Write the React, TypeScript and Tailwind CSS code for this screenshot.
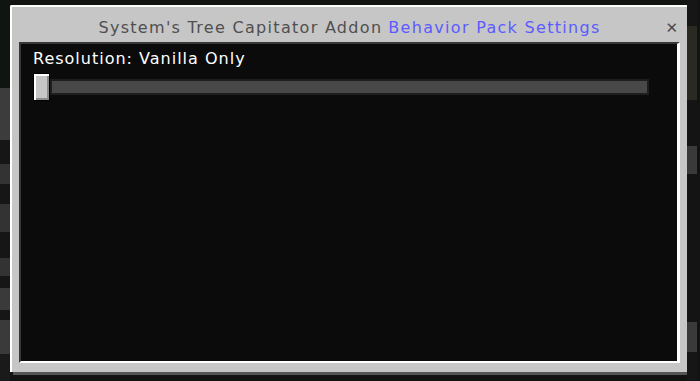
import React from 'react';

const font = { fontFamily: '"DejaVu Sans", "Liberation Sans", sans-serif' };

function EdgeStrip({ blocks }: { blocks: { h: string; c: string }[] }) {
  return (
    <div className="flex w-[10px] flex-col">
      {blocks.map((b, i) => (
        <div key={i} className={`${b.h} ${b.c}`} />
      ))}
    </div>
  );
}

function Slider() {
  return (
    <div className="mt-[4px] flex items-center">
      <div className="h-[28px] w-[17px] border border-black bg-[#c6c6c6] shadow-[inset_2px_2px_0_#ffffff,inset_-2px_-2px_0_#8b8b8b]" />
      <div className="h-[16px] w-[599px] border-2 border-[#1e1e1e] bg-[#484848]" />
    </div>
  );
}

export default function App() {
  return (
    <div className="flex h-[381px] w-[700px] overflow-hidden bg-[#121412]" style={font}>
      <EdgeStrip
        blocks={[
          { h: 'h-[88px]', c: 'bg-[#0f1510]' },
          { h: 'h-[52px]', c: 'bg-[#3c3c3c]' },
          { h: 'h-[24px]', c: 'bg-[#161616]' },
          { h: 'h-[20px]', c: 'bg-[#333333]' },
          { h: 'h-[20px]', c: 'bg-[#161616]' },
          { h: 'h-[28px]', c: 'bg-[#333333]' },
          { h: 'h-[26px]', c: 'bg-[#161616]' },
          { h: 'h-[18px]', c: 'bg-[#333333]' },
          { h: 'h-[12px]', c: 'bg-[#161616]' },
          { h: 'h-[22px]', c: 'bg-[#3a3a3a]' },
          { h: 'h-[10px]', c: 'bg-[#161616]' },
          { h: 'h-[34px]', c: 'bg-[#3a3a3a]' },
          { h: 'h-[27px]', c: 'bg-[#1a1a1a]' },
        ]}
      />
      <div className="mt-[5px] flex h-[367px] w-[677px] flex-col rounded-tl-[2px] border-l-2 border-t-2 border-white bg-[#c6c6c6] shadow-[3px_3px_0_#555555]">
        <div className="relative flex h-[35px] items-center justify-center pt-[7px] text-[16px] tracking-[1.3px]">
          <span className="text-[#4f4f4f]">System's Tree Capitator Addon</span>
          <span className="ml-[6px] text-[#5b5bff]">Behavior Pack Settings</span>
          <span className="absolute right-[9px] top-[14px] text-[15px] leading-none tracking-normal text-[#4c4c4c]">✕</span>
        </div>
        <div className="ml-[7px] h-[321px] w-[661px] border-b-2 border-l-2 border-r-[3px] border-t-2 border-b-white border-l-[#373737] border-r-white border-t-[#373737] bg-[#0b0b0b] pl-[12px] pt-[5px]">
          <div className="text-[16px] leading-[20px] tracking-[1px] text-white">Resolution: Vanilla Only</div>
          <Slider />
        </div>
      </div>
      <EdgeStrip
        blocks={[
          { h: 'h-[26px]', c: 'bg-[#161616]' },
          { h: 'h-[74px]', c: 'bg-[#2a2a22]' },
          { h: 'h-[46px]', c: 'bg-[#141414]' },
          { h: 'h-[28px]', c: 'bg-[#3a3a3a]' },
          { h: 'h-[148px]', c: 'bg-[#141414]' },
          { h: 'h-[30px]', c: 'bg-[#3a3a3a]' },
          { h: 'h-[29px]', c: 'bg-[#161616]' },
        ]}
      />
    </div>
  );
}
